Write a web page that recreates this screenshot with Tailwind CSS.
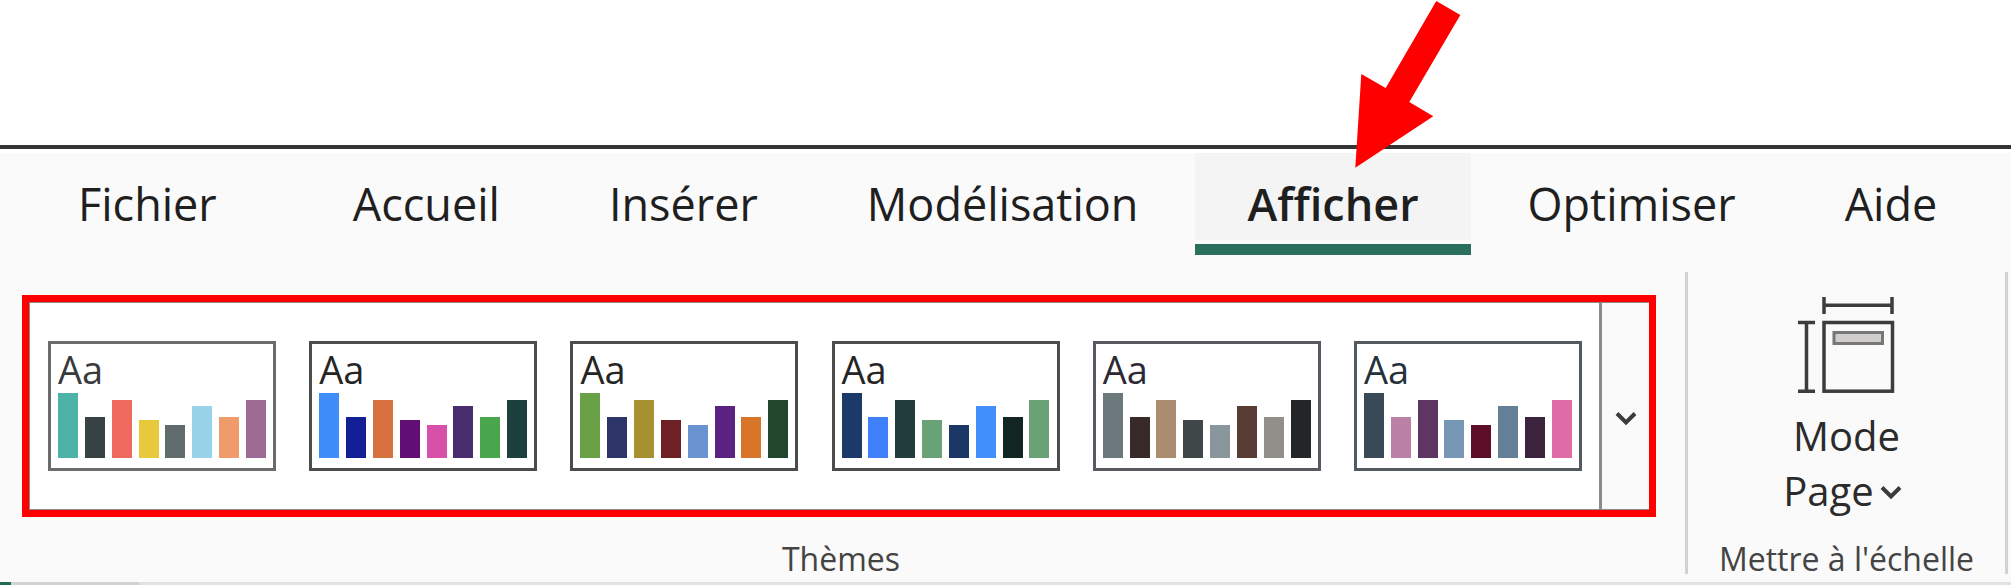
<!DOCTYPE html>
<html lang="fr">
<head>
  <meta charset="UTF-8">
  <meta name="viewport" content="width=device-width, initial-scale=1.0">
  <title>Afficher</title>
  <script src="https://cdn.jsdelivr.net/npm/@tailwindcss/browser@4"></script>
</head>
<body class="bg-white min-h-screen flex flex-col overflow-hidden font-['Open_Sans','Noto_Sans',sans-serif] text-[#1f1f1f]">

  <header class="mt-[145px] border-t-4 border-[#333533] bg-white pt-1">
    <nav class="flex gap-[5px] bg-[#fafafa] pl-[26px] text-[45px] leading-[101px]">
      <a href="#" class="px-[52px] mr-[27px]">Fichier</a>
      <a href="#" class="px-[52px]">Accueil</a>
      <a href="#" class="px-[52px]">Insérer</a>
      <a href="#" class="px-[52px]">Modélisation</a>
      <a href="#" aria-current="page" class="relative px-[52px] font-semibold">
        <span class="absolute inset-x-0 top-0 h-[87px] bg-[#f4f4f4]"></span>
        <span class="relative">Afficher</span>
        <span class="absolute inset-x-0 top-[91px] h-[11px] bg-[#2a705c]"></span>
        <!-- Pointer arrow over the active tab -->
        <svg class="absolute left-[160px] top-[-153px]" width="106" height="168" viewBox="0 0 106 168" fill="#ff0000" aria-hidden="true">
          <path d="M81.3 1 105.3 15 54.3 102 78.3 116.3 0.3 167.7 6.3 74 30.7 88z"/>
        </svg>
      </a>
      <a href="#" class="px-[52px]">Optimiser</a>
      <a href="#" class="px-[52px]">Aide</a>
    </nav>
  </header>

  <main class="flex-1 flex flex-col bg-[#fafafa]">
    <div class="mt-[18px] flex pl-[22px] pr-[3px]">

      <!-- Themes -->
      <section class="flex-1 flex flex-col pt-[23px] pr-[29px]" aria-labelledby="themesLabel">
        <div class="flex border-[7px] border-[#ff0000] h-[222px]">
          <div id="themes" class="flex-1 flex items-center justify-between bg-white border border-[#8a8a8a] border-r-0 pl-[18px] pr-[17px]"></div>
          <button type="button" aria-label="Autres thèmes" class="w-[50px] flex items-center justify-center border border-[#8a8a8a] border-l-3 border-r-0 pt-6 pl-px">
            <svg width="22" height="15" viewBox="0 0 22 15" fill="none" stroke="#3b3b3b" stroke-width="4" aria-hidden="true"><path d="M2 2.5 11 11.5 20 2.5"/></svg>
          </button>
        </div>
        <h2 id="themesLabel" class="mt-[27px] pl-1 text-center text-[32px] leading-[30px] text-[#444]">Thèmes</h2>
      </section>

      <!-- Scale to fit -->
      <section class="w-[323px] flex flex-col items-center border-x-3 border-[#d2d2d2] pt-[22px]" aria-labelledby="scaleLabel">
        <button type="button" class="flex flex-col items-center text-[40px] leading-[55px] text-[#2b2b2b]">
          <svg width="100" height="100" viewBox="0 0 100 100" fill="none" stroke="#3d3d3b" stroke-width="3.5" aria-hidden="true">
            <path d="M27 3v17M95 3v17M27 11.2h68"/>
            <path d="M1 28.5h17M1 97.2h17M9.5 28.5v68.7"/>
            <rect x="27" y="28.5" width="68.5" height="68.7"/>
            <rect x="37" y="38.5" width="48.5" height="11" fill="#d0cfcd" stroke="#777775" stroke-width="3"/>
          </svg>
          <span class="mt-[14px]">Mode</span>
          <span class="flex items-center gap-1.5 pr-2">Page
            <svg class="mt-1" width="22" height="15" viewBox="0 0 22 15" fill="none" stroke="#3b3b3b" stroke-width="4" aria-hidden="true"><path d="M2 2.5 11 11.5 20 2.5"/></svg>
          </span>
        </button>
        <h2 id="scaleLabel" class="mt-[26px] text-[32px] leading-[30px] text-[#444] whitespace-nowrap">Mettre à l'échelle</h2>
      </section>
    </div>

    <!-- Top edge of the report area -->
    <div class="mt-auto flex h-[3px] bg-[#e2e2e2]">
      <div class="w-[11px] bg-[#1f6b55]"></div>
      <div class="w-[128px] bg-[#d2d2d2]"></div>
    </div>
  </main>

  <script>
    const heights = [65, 41, 58, 38, 33, 52, 41, 58];
    const themes = [
      { line: '#6b6b6b', text: '#3a3a3a', bars: ['#4db3a8', '#374245', '#ee6a5e', '#e9c93c', '#5f6b6d', '#99d3e9', '#f09b6b', '#9d6995'] },
      { line: '#4c4c4a', text: '#252525', bars: ['#3f8cfb', '#131f94', '#d87140', '#610f74', '#d850a8', '#472d6e', '#4aa64c', '#1d403d'] },
      { line: '#4c4c4c', text: '#252525', bars: ['#69a146', '#2d3468', '#a69030', '#6f2024', '#6994cf', '#5c2282', '#d87529', '#21462b'] },
      { line: '#4c4c4c', text: '#252525', bars: ['#1c3a69', '#3f80fb', '#213e3d', '#69a276', '#1b3765', '#418ffb', '#112523', '#69a276'] },
      { line: '#5b5862', text: '#2d2a36', bars: ['#6c787b', '#372a29', '#aa8d71', '#3f4748', '#89979c', '#593c34', '#918f89', '#222627'] },
      { line: '#525a62', text: '#26323b', bars: ['#394958', '#bb80a6', '#5f3563', '#7797b4', '#5d0e29', '#647f98', '#3b223d', '#de6ca6'] },
    ];

    document.getElementById('themes').innerHTML = themes.map((theme, i) => `
      <button type="button" aria-label="Thème ${i + 1}" class="w-[228px] h-[130px] flex flex-col justify-between border-3 bg-white pt-[7px] px-[7px] pb-[10px] text-left" style="border-color: ${theme.line}">
        <span class="text-[38px] leading-[36px]" style="color: ${theme.text}">Aa</span>
        <span class="flex items-end justify-between">
          ${theme.bars.map((color, j) => `<span class="w-5" style="height: ${heights[j]}px; background: ${color}"></span>`).join('')}
        </span>
      </button>`).join('');
  </script>

</body>
</html>
